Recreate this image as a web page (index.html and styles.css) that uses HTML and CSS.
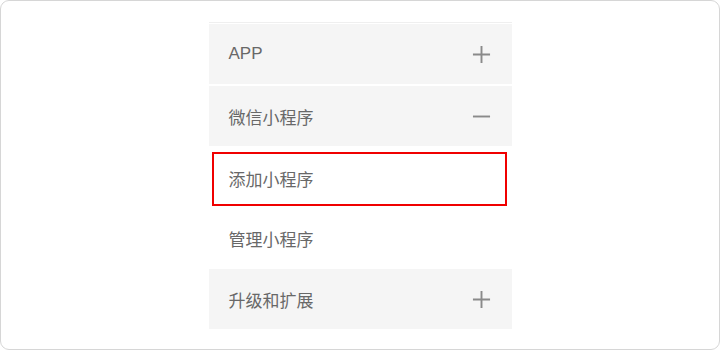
FILE: index.html
```html
<!DOCTYPE html>
<html lang="zh">
<head>
<meta charset="utf-8">
<link rel="stylesheet" href="styles.css">
</head>
<body>
<div class="frame">
  <div class="menu">
    <div class="topline"></div>
    <div class="item group">
      <span class="label">APP</span>
      <svg class="icon" viewBox="0 0 20 20"><path d="M10 1v18M1 10h18" stroke="#8a8a8a" stroke-width="2" fill="none"/></svg>
    </div>
    <div class="item group">
      <span class="label">微信小程序</span>
      <svg class="icon" viewBox="0 0 20 20"><path d="M1 10h18" stroke="#8a8a8a" stroke-width="2" fill="none"/></svg>
    </div>
    <div class="item sub">
      <div class="highlight"></div>
      <span class="label">添加小程序</span>
    </div>
    <div class="item sub">
      <span class="label">管理小程序</span>
    </div>
    <div class="item group">
      <span class="label">升级和扩展</span>
      <svg class="icon" viewBox="0 0 20 20"><path d="M10 1v18M1 10h18" stroke="#8a8a8a" stroke-width="2" fill="none"/></svg>
    </div>
  </div>
</div>
</body>
</html>
```

FILE: styles.css
```css
html, body {
  margin: 0;
  padding: 0;
  background: #ffffff;
}
.frame {
  box-sizing: border-box;
  width: 720px;
  height: 350px;
  border: 1px solid #d6d6d6;
  border-radius: 9px;
  background: #ffffff;
  display: flex;
  justify-content: center;
  padding-top: 21px;
}
.menu {
  width: 303px;
  display: flex;
  flex-direction: column;
}
.topline {
  height: 1px;
  background: #efefef;
  margin-bottom: 1px;
}
.item {
  position: relative;
  height: 60px;
  display: flex;
  align-items: center;
  justify-content: space-between;
  padding: 0 21px 0 20px;
  font-family: "Liberation Sans", "Noto Sans CJK SC", sans-serif;
  font-size: 17px;
  color: #686868;
}
.group {
  background: #f5f5f5;
  margin-bottom: 2px;
}
.sub {
  background: #ffffff;
}
.sub:nth-of-type(5) {
  margin-bottom: 1px;
}
.icon {
  width: 19px;
  height: 19px;
}
.highlight {
  position: absolute;
  left: 3px;
  top: 4px;
  width: 295px;
  height: 54px;
  box-sizing: border-box;
  border: 2px solid #f00000;
}
```
